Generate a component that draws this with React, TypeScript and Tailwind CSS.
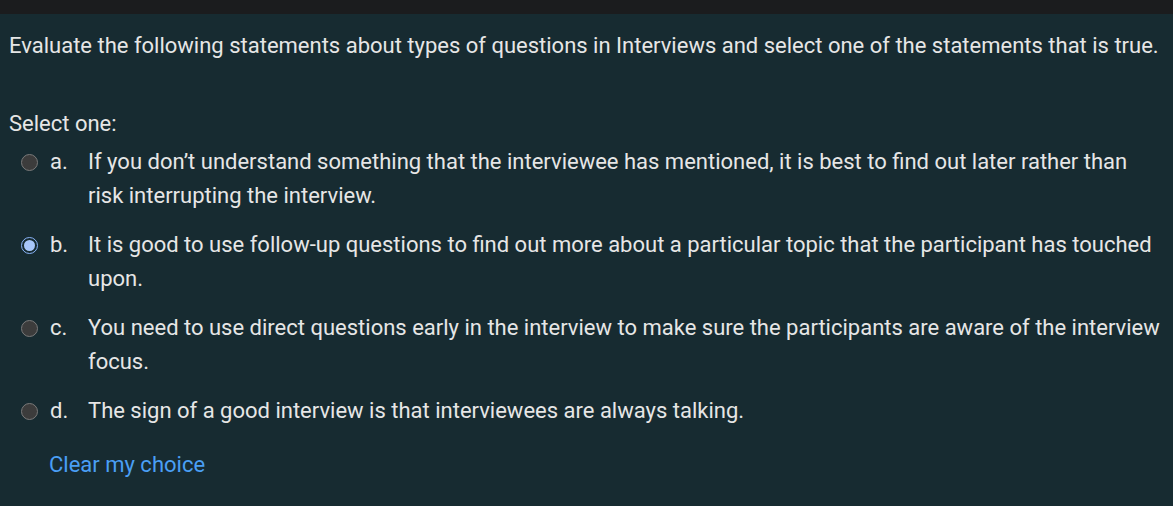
import React from "react";

const options = [
  { l: "a.", t: "If you don’t understand something that the interviewee has mentioned, it is best to find out later rather than risk interrupting the interview.", sel: false },
  { l: "b.", t: "It is good to use follow-up questions to find out more about a particular topic that the participant has touched upon.", sel: true },
  { l: "c.", t: "You need to use direct questions early in the interview to make sure the participants are aware of the interview focus.", sel: false },
  { l: "d.", t: "The sign of a good interview is that interviewees are always talking.", sel: false },
];

function Radio({ sel }: { sel: boolean }) {
  if (sel) {
    return (
      <span className="flex h-[17px] w-[17px] shrink-0 items-center justify-center rounded-full border-[1.5px] border-[#8ab4f8] bg-[#172b31]">
        <span className="h-[11px] w-[11px] rounded-full bg-[#a8c7fa]" />
      </span>
    );
  }
  return <span className="h-[17px] w-[17px] shrink-0 rounded-full border-[1.5px] border-[#7a7a7a] bg-[#3c3c3c]" />;
}

export default function App() {
  return (
    <div className="min-h-[506px] w-full bg-[#172b31] text-[#e6e6e6]" style={{ fontFamily: "Roboto, 'Liberation Sans', sans-serif" }}>
      <div className="h-[14px] bg-[#1b1c1e]" />
      <div className="pl-[9px] pr-2 text-[22px] leading-[34px]">
        <p className="pt-[15px]">Evaluate the following statements about types of questions in Interviews and select one of the statements that is true.</p>
        <p className="mt-[44px]">Select one:</p>
        <div className="mt-[4px] flex flex-col gap-[15px]">
          {options.map((o) => (
            <div key={o.l} className="flex items-start">
              <div className="flex h-[34px] w-[79px] items-center pl-[12px]">
                <Radio sel={o.sel} />
                <span className="ml-[12px]">{o.l}</span>
              </div>
              <span className="flex-1">{o.t}</span>
            </div>
          ))}
        </div>
        <div className="mt-[20px] pl-[40px] text-[#4a9ff5]">Clear my choice</div>
      </div>
    </div>
  );
}
